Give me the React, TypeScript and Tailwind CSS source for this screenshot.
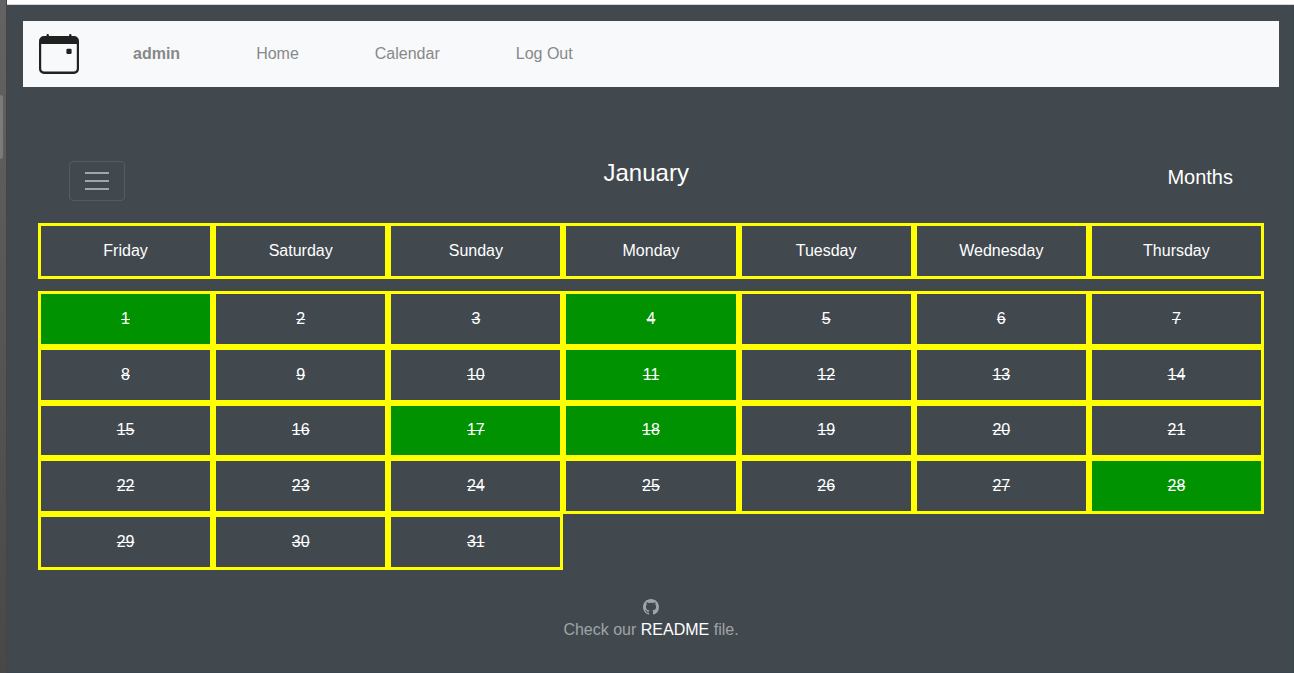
const weekdays = ["Friday", "Saturday", "Sunday", "Monday", "Tuesday", "Wednesday", "Thursday"];
const booked = [1, 4, 11, 17, 18, 28];
const weeks = [0, 1, 2, 3, 4].map((week) =>
  Array.from({ length: 7 }, (_, i) => week * 7 + i + 1).filter((day) => day <= 31),
);

function CalendarLogo() {
  return (
    <svg viewBox="0 0 40 40" className="size-10" aria-hidden="true">
      <path fill="#212121" fillRule="evenodd" d="M5 2H7.5V1.2a1.2 1.2 0 0 1 2.4 0V2H30.1V1.2a1.2 1.2 0 0 1 2.4 0V2H35a5 5 0 0 1 5 5V35a5 5 0 0 1-5 5H5a5 5 0 0 1-5-5V7a5 5 0 0 1 5-5ZM2.2 10V34.5A3 3 0 0 0 5.2 37.4H34.8a3 3 0 0 0 3-2.9V10Z" />
      <rect x="27.4" y="14.8" width="5.2" height="5.2" rx="1.2" fill="#212121" />
    </svg>
  );
}

function GithubMark() {
  return (
    <svg viewBox="0 0 16 16" className="size-4" fill="currentColor" aria-hidden="true">
      <path d="M8 0C3.58 0 0 3.58 0 8c0 3.54 2.29 6.53 5.47 7.59.4.07.55-.17.55-.38 0-.19-.01-.82-.01-1.49-2.01.37-2.53-.49-2.69-.94-.09-.23-.48-.94-.82-1.13-.28-.15-.68-.52-.01-.53.63-.01 1.08.58 1.23.82.72 1.21 1.87.87 2.33.66.07-.52.28-.87.51-1.07-1.78-.2-3.64-.89-3.64-3.95 0-.87.31-1.59.82-2.15-.08-.2-.36-1.02.08-2.12 0 0 .67-.21 2.2.82.64-.18 1.32-.27 2-.27s1.36.09 2 .27c1.53-1.04 2.2-.82 2.2-.82.44 1.1.16 1.92.08 2.12.51.56.82 1.27.82 2.15 0 3.07-1.87 3.75-3.65 3.95.29.25.54.73.54 1.48 0 1.07-.01 1.93-.01 2.2 0 .21.15.46.55.38A8.01 8.01 0 0 0 16 8c0-4.42-3.58-8-8-8" />
    </svg>
  );
}

export default function App() {
  return (
    <div className="flex min-h-screen bg-[#41494f] font-['Liberation_Sans',Arial,sans-serif] text-base leading-6 text-white">
      <div className="w-[7px] shrink-0 border-r border-[#464442] bg-linear-to-b from-[#636363] to-[#484848] pt-[95px]">
        <div className="h-16 w-[3px] rounded-r-[3px] bg-[#7b7b7b]" />
      </div>
      <div className="flex min-w-0 flex-1 flex-col">
        <div className="h-[5px] border-b border-[#d6d6d6] bg-white" />
        <div className="flex-1 border-r border-b border-[#394650] pt-4 pr-[14px] pl-4">
          <nav className="flex h-[66px] items-center bg-[#f8f9fb] px-4 text-[#878889]">
            <a href="#home" aria-label="Calendar home">
              <CalendarLogo />
            </a>
            <a href="#admin" className="ml-[54px] font-bold">admin</a>
            <a href="#home" className="ml-[76px]">Home</a>
            <a href="#calendar" className="ml-[76px]">Calendar</a>
            <a href="#logout" className="ml-[76px]">Log Out</a>
          </nav>
          <main className="px-[15px] pt-[71px]">
            <header className="flex h-[65px] items-start justify-between px-[31px]">
              <button
                type="button"
                aria-label="Toggle navigation"
                className="mt-[3px] flex h-10 w-14 flex-col items-center justify-center gap-[6px] rounded border border-[#555b61]"
              >
                <span className="h-[2px] w-6 bg-[#a2a5a8]" />
                <span className="h-[2px] w-6 bg-[#a2a5a8]" />
                <span className="h-[2px] w-6 bg-[#a2a5a8]" />
              </button>
              <h1 className="text-2xl leading-[30px]">January</h1>
              <a href="#months" className="mt-1 text-xl leading-[30px]">Months</a>
            </header>
            <table className="block w-full text-center">
              <thead className="mb-3 block">
                <tr className="grid grid-cols-7">
                  {weekdays.map((name) => (
                    <th key={name} scope="col" className="flex h-14 items-center justify-center border-3 border-[#ffff00] font-normal">
                      {name}
                    </th>
                  ))}
                </tr>
              </thead>
              <tbody className="grid h-[279px] grid-rows-5">
                {weeks.map((week) => (
                  <tr key={week[0]} className="grid grid-cols-7">
                    {week.map((day) => (
                      <td
                        key={day}
                        className={`flex items-center justify-center border-3 border-[#ffff00] line-through ${booked.includes(day) ? "bg-[#009200]" : ""}`}
                      >
                        {day}
                      </td>
                    ))}
                  </tr>
                ))}
              </tbody>
            </table>
          </main>
          <footer className="flex flex-col items-center pt-[29px] text-[#a0a4a7]">
            <GithubMark />
            <p className="mt-[3px]">
              Check our <a href="#readme" className="text-white">README</a> file.
            </p>
          </footer>
        </div>
      </div>
    </div>
  );
}
